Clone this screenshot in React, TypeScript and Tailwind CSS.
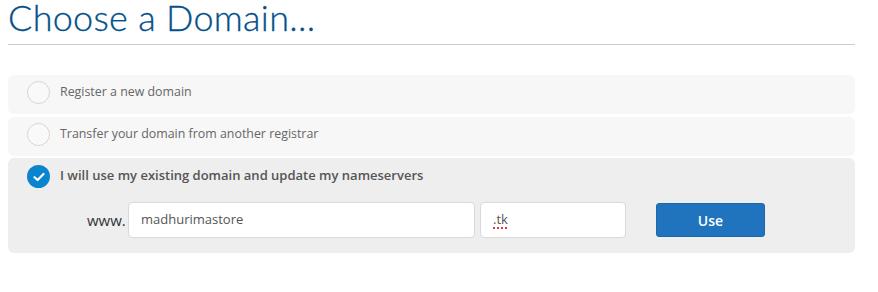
import React from "react";

function Radio() {
  return <span className="block w-[23px] h-[23px] rounded-full border border-[#d8d5cf] bg-[#f9f9f9]" />;
}

function Checked() {
  return (
    <span className="flex w-[23px] h-[23px] rounded-full bg-[#0a84cf] items-center justify-center">
      <svg width="12" height="10" viewBox="0 0 12 10" fill="none">
        <path d="M1.5 5.2 L4.6 8 L10.5 2" stroke="white" strokeWidth="2.2" strokeLinecap="round" strokeLinejoin="round" />
      </svg>
    </span>
  );
}

export default function App() {
  const font = { fontFamily: "'Open Sans', 'Liberation Sans', sans-serif" };
  return (
    <div className="w-[878px] h-[292px] bg-white" style={font}>
      <div className="ml-2 w-[847px]">
        <div className="h-[45px] border-b border-[#cccccc] flex items-start">
          <h1
            className="text-[36px] leading-[34px] text-[#03508a] tracking-[0.3px] font-light"
            style={{ fontFamily: "Lato, 'Open Sans', sans-serif", WebkitTextStroke: "0.3px #03508a" }}
          >
            Choose a Domain...
          </h1>
        </div>
        <div className="mt-[30px] flex flex-col">
          <div className="h-[39px] rounded-[6px] bg-[#f7f7f7] flex items-start pt-[6px] pl-[19px]">
            <Radio />
            <span className="ml-[10px] text-[12.4px] leading-[22px] text-[#666]">Register a new domain</span>
          </div>
          <div className="mt-[3px] h-[39px] rounded-[6px] bg-[#f7f7f7] flex items-start pt-[6px] pl-[19px]">
            <Radio />
            <span className="ml-[10px] text-[12.4px] leading-[22px] text-[#666]">Transfer your domain from another registrar</span>
          </div>
          <div className="mt-[2px] h-[95px] rounded-[6px] bg-[#eeeeee] pl-[19px] pt-[7px]">
            <div className="flex items-start">
              <Checked />
              <span className="ml-[10px] text-[13px] leading-[20px] font-semibold text-[#555]">
                I will use my existing domain and update my nameservers
              </span>
            </div>
            <div className="mt-[14px] flex items-center">
              <span className="ml-[60px] w-[41px] text-[15px] text-[#333]">www.</span>
              <div className="w-[347px] h-[36px] bg-white border border-[#d9d9d9] rounded-[4px] flex items-center pl-[12px] text-[13px] text-[#555]">
                madhurimastore
              </div>
              <div className="ml-[5px] w-[146px] h-[36px] bg-white border border-[#d9d9d9] rounded-[4px] flex items-center pl-[12px] text-[13px] text-[#555]">
                <span className="underline decoration-dotted decoration-[#e33] decoration-2 underline-offset-[3px]">.tk</span>
              </div>
              <button className="ml-[30px] w-[109px] h-[34px] bg-[#1f74bd] border border-[#1b68aa] rounded-[3px] text-white text-[14px] font-semibold">
                Use
              </button>
            </div>
          </div>
        </div>
      </div>
    </div>
  );
}
